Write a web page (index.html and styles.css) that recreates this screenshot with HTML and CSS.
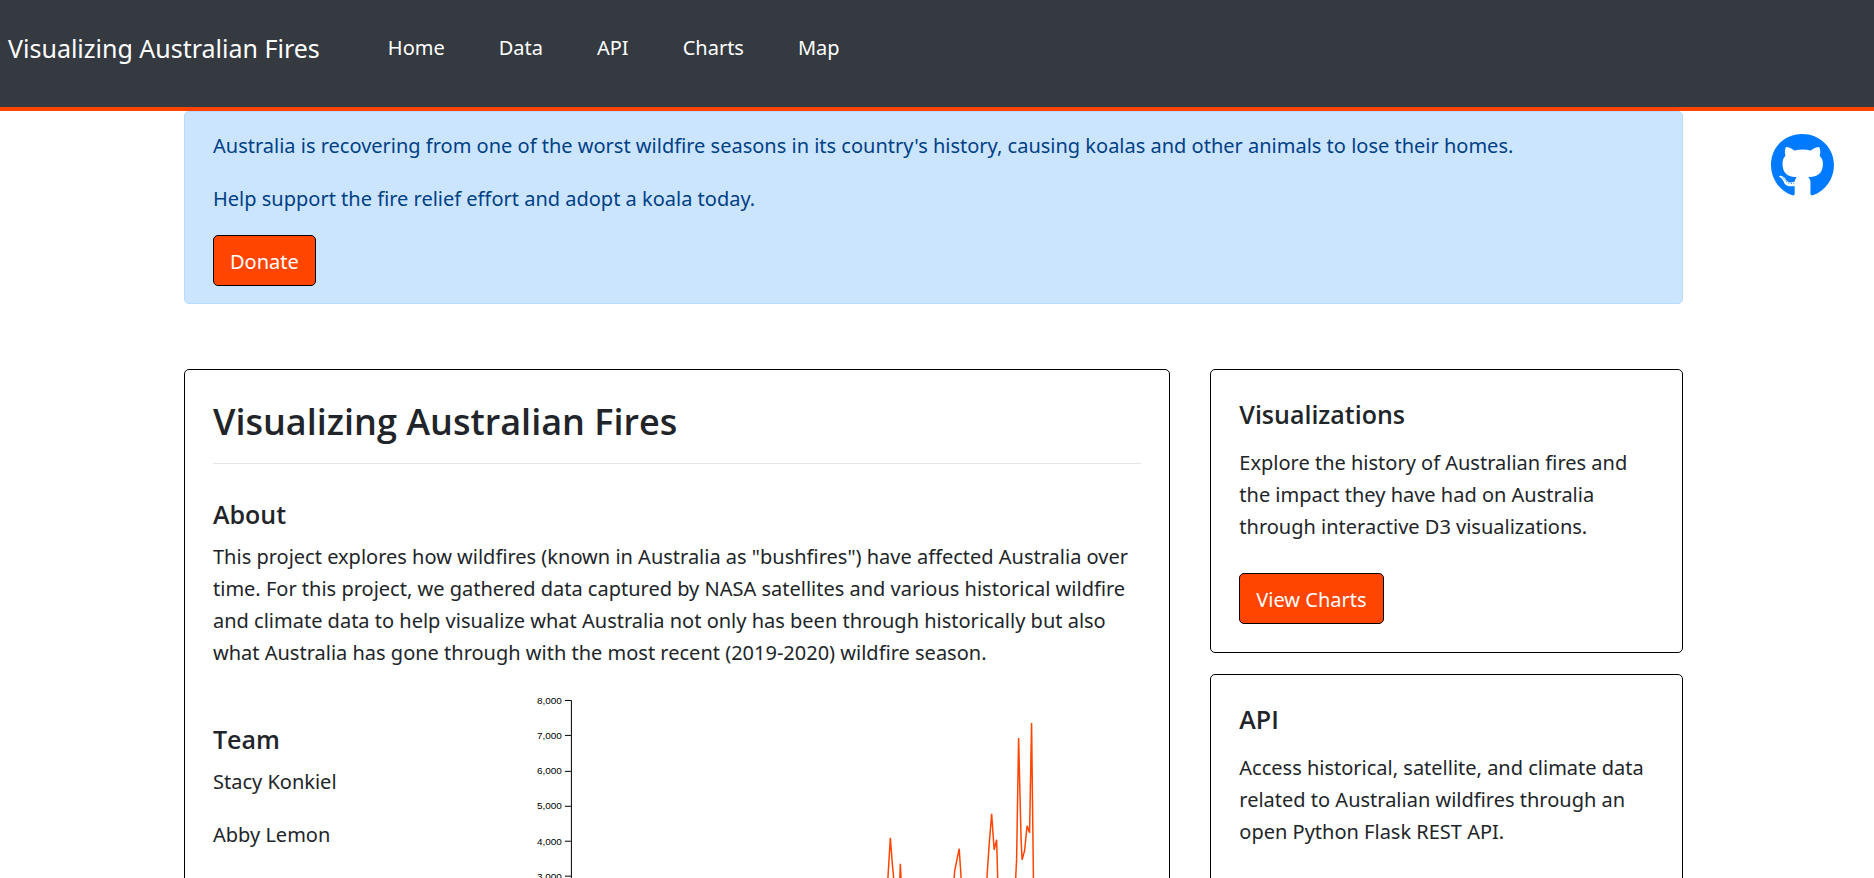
FILE: index.html
```html
<!DOCTYPE html>
<html lang="en">
<head>
<meta charset="utf-8">
<meta name="viewport" content="width=device-width, initial-scale=1">
<title>Visualizing Australian Fires</title>
<link rel="stylesheet" href="styles.css">
</head>
<body>
<header class="navbar">
  <a class="brand" href="#">Visualizing Australian Fires</a>
  <nav class="links">
    <a href="#">Home</a>
    <a href="#">Data</a>
    <a href="#">API</a>
    <a href="#">Charts</a>
    <a href="#">Map</a>
  </nav>
</header>
<div class="page">
  <main class="content">
    <section class="alert">
      <p>Australia is recovering from one of the worst wildfire seasons in its country's history, causing koalas and other animals to lose their homes.</p>
      <p>Help support the fire relief effort and adopt a koala today.</p>
      <button class="btn" type="button">Donate</button>
    </section>
    <div class="columns">
      <article class="card about">
        <h1>Visualizing Australian Fires</h1>
        <hr>
        <h2>About</h2>
        <p>This project explores how wildfires (known in Australia as "bushfires") have affected Australia over time. For this project, we gathered data captured by NASA satellites and various historical wildfire and climate data to help visualize what Australia not only has been through historically but also what Australia has gone through with the most recent (2019-2020) wildfire season.</p>
        <div class="split">
          <section class="team">
            <h2>Team</h2>
            <p>Stacy Konkiel</p>
            <p>Abby Lemon</p>
          </section>
          <svg class="chart" viewBox="1 -1 620 310" role="img" aria-label="Fires over time">
            <g class="axis">
              <path d="M44 10.5H50.5V293M44 45.5H50M44 81.5H50M44 116.5H50M44 151.5H50M44 186.5H50"/>
            </g>
            <g class="ticks">
              <text x="41" y="14">8,000</text>
              <text x="41" y="49">7,000</text>
              <text x="41" y="84">6,000</text>
              <text x="41" y="119">5,000</text>
              <text x="41" y="155">4,000</text>
              <text x="41" y="190">3,000</text>
            </g>
            <path class="series" d="M366 215L370 148L372 174L374 195L379 205L380 174L382 215L410 250L433 200L434.500 181L439 159L442 205L455 240L466 200L469 155L471.500 124L474 160L476.500 150L478 205L486 240L495 200L496.500 170L498.500 48L501 150L502 170L504.500 161L507 136L509.500 143L511.500 33L513.500 200"/>
          </svg>
        </div>
      </article>
      <aside class="side">
        <section class="card">
          <h2>Visualizations</h2>
          <p>Explore the history of Australian fires and the impact they have had on Australia through interactive D3 visualizations.</p>
          <button class="btn" type="button">View Charts</button>
        </section>
        <section class="card">
          <h2>API</h2>
          <p>Access historical, satellite, and climate data related to Australian wildfires through an open Python Flask REST API.</p>
        </section>
      </aside>
    </div>
  </main>
  <a class="github" href="#" aria-label="GitHub">
    <svg viewBox="0 0 496 512" aria-hidden="true"><path d="M165.900 397.400c0 2-2.300 3.600-5.200 3.600-3.300.3-5.600-1.300-5.600-3.600 0-2 2.300-3.600 5.200-3.600 3-.3 5.600 1.300 5.600 3.600zm-31.100-4.500c-.7 2 1.300 4.300 4.300 4.900 2.600 1 5.600 0 6.200-2s-1.300-4.300-4.300-5.200c-2.600-.7-5.500.3-6.200 2.300zm44.200-1.700c-2.900.7-4.900 2.600-4.600 4.900.3 2 2.900 3.300 5.900 2.600 2.900-.7 4.900-2.600 4.600-4.600-.3-1.900-3-3.200-5.900-2.900zM244.800 8C106.100 8 0 113.300 0 252c0 110.900 69.800 205.800 169.500 239.200 12.800 2.300 17.300-5.600 17.300-12.100 0-6.200-.3-40.400-.3-61.400 0 0-70 15-84.700-29.800 0 0-11.400-29.100-27.800-36.600 0 0-22.900-15.700 1.600-15.400 0 0 24.900 2 38.600 25.800 21.900 38.600 58.600 27.500 72.900 20.900 2.300-16 8.800-27.100 16-33.700-55.900-6.200-112.300-14.300-112.300-110.500 0-27.500 7.600-41.300 23.600-58.900-2.600-6.500-11.100-33.300 2.600-67.900 20.900-6.500 69 27 69 27 20-5.600 41.500-8.500 62.800-8.500s42.800 2.900 62.800 8.500c0 0 48.100-33.600 69-27 13.700 34.700 5.200 61.400 2.600 67.900 16 17.700 25.800 31.500 25.800 58.900 0 96.500-58.900 104.200-114.800 110.500 9.200 7.900 17 22.900 17 46.400 0 33.700-.3 75.400-.3 83.600 0 6.500 4.600 14.400 17.300 12.100C428.200 457.800 496 362.900 496 252 496 113.300 383.500 8 244.800 8zM97.200 352.900c-1.300 1-1 3.300.7 5.200 1.600 1.600 3.900 2.300 5.200 1 1.300-1 1-3.300-.7-5.200-1.600-1.600-3.900-2.300-5.200-1zm-10.800-8.100c-.7 1.300.3 2.900 2.300 3.900 1.600 1 3.600.7 4.300-.7.7-1.300-.3-2.900-2.300-3.900-2-.6-3.600-.3-4.300.7zm32.400 35.600c-1.600 1.300-1 4.300 1.300 6.200 2.300 2.300 5.200 2.600 6.500 1 1.300-1.300.7-4.300-1.300-6.200-2.200-2.300-5.200-2.600-6.500-1zm-11.400-14.700c-1.600 1-1.600 3.600 0 5.900 1.600 2.300 4.300 3.300 5.600 2.300 1.600-1.300 1.600-3.900 0-6.200-1.400-2.300-4-3.300-5.600-2z"/></svg>
  </a>
</div>
</body>
</html>
```

FILE: styles.css
```css
* { box-sizing: border-box; }

body {
  margin: 0;
  background: #fff;
  color: #212529;
  font: 400 20px/32px "Segoe UI", "Noto Sans", "Open Sans", sans-serif;
}

h1, h2, p { margin: 0; }
h1, h2 { font-family: "Segoe UI", "Open Sans", sans-serif; font-weight: 600; }
h1 { font-size: 36px; line-height: 47px; }
h2 { font-size: 25px; line-height: 32px; }

.navbar {
  display: flex;
  align-items: center;
  gap: 68px;
  padding: 28px 8px 39px;
  background: #343a40;
  border-bottom: 4px solid #ff4500;
}
.navbar a { color: #fff; text-decoration: none; }
.brand { font-size: 25px; line-height: 40px; }
.links { display: flex; gap: 54px; }

.page { display: flex; }
.content { flex: 1; padding-left: 184px; }

.alert {
  padding: 18px 28px 17px;
  background: #cce5ff;
  border: 1px solid #b8daff;
  border-radius: 5px;
  color: #004085;
}
.alert p { margin-bottom: 21px; }
.alert p + p { margin-bottom: 20px; }

.btn {
  display: block;
  height: 51px;
  padding: 2px 16px 0;
  background: #ff4500;
  border: 1px solid #000;
  border-radius: 5px;
  color: #fff;
  font: inherit;
}

.columns {
  display: grid;
  grid-template-columns: 987fr 473fr;
  gap: 40px;
  margin-top: 65px;
}
.card {
  padding: 28px;
  border: 1px solid #000;
  border-radius: 5px;
}
.about hr {
  margin: 18px 0 34px;
  border: 0;
  border-top: 1px solid #e5e5e5;
}
.about h2 { margin-bottom: 11px; }

.split {
  display: grid;
  grid-template-columns: 1fr 2fr;
  margin-top: 20px;
}
.team { padding-top: 34px; }
.team p { margin-bottom: 21px; }
.chart { width: 100%; }
.axis path { fill: none; stroke: #000; }
.ticks { font: 10px "Liberation Sans", Arial, sans-serif; text-anchor: end; }
.series { fill: none; stroke: #ff4500; stroke-width: 1.5; }

.side {
  display: flex;
  flex-direction: column;
  gap: 21px;
}
.side h2 { margin-bottom: 17px; }
.side p { margin-bottom: 30px; }

.github {
  display: flex;
  justify-content: flex-end;
  align-items: flex-start;
  width: 191px;
  padding: 22px 40px 0 0;
}
.github svg { height: 65px; fill: #007bff; }
```
